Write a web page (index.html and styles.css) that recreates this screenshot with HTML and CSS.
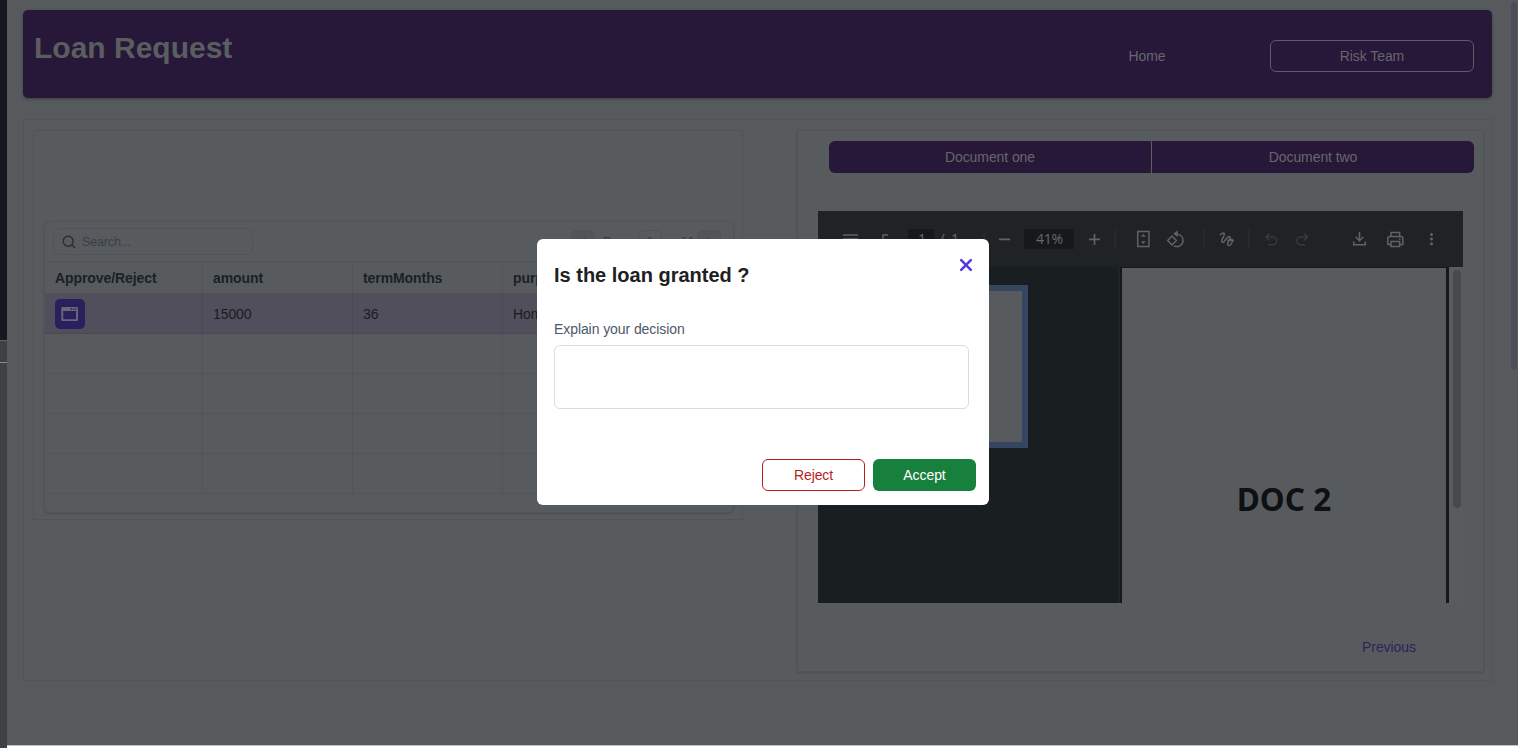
FILE: index.html
```html
<!DOCTYPE html>
<html lang="en">
<head>
<meta charset="utf-8">
<title>Loan Request</title>
<link rel="stylesheet" href="styles.css">
</head>
<body>
<div class="app">
  <div class="rail"><div class="rail-top"></div><div class="rail-mark"></div></div>
  <main class="main">
    <header class="banner">
      <h1>Loan Request</h1>
      <nav class="nav">
        <a class="nav-item">Home</a>
        <a class="nav-item outlined">Risk Team</a>
      </nav>
    </header>
    <section class="content">
      <div class="panel requests">
        <div class="card">
          <div class="toolbar">
            <div class="search">
              <svg width="14" height="14" viewBox="0 0 14 14" fill="none" stroke="#292e34" stroke-width="1.4"><circle cx="6.2" cy="6.2" r="5"/><path d="M9.8 9.8l3.2 3.2"/></svg>
              <span>Search...</span>
            </div>
            <div class="pager">
              <span class="page-btn"><svg width="8" height="10" viewBox="0 0 8 10" fill="none" stroke="#3c4146" stroke-width="1.3"><path d="M6 1L2 5l4 4"/></svg></span>
              <span class="page-label">Page</span>
              <span class="page-no">1</span>
              <span class="page-of">of 1</span>
              <span class="page-btn"><svg width="8" height="10" viewBox="0 0 8 10" fill="none" stroke="#3c4146" stroke-width="1.3"><path d="M2 1l4 4-4 4"/></svg></span>
            </div>
          </div>
          <div class="grid head"><div>Approve/Reject</div><div>amount</div><div>termMonths</div><div>purpose</div><div></div></div>
          <div class="grid row selected">
            <div><span class="open-btn"><svg width="18" height="16" viewBox="0 0 18 16"><path fill="#686a72" fill-rule="evenodd" d="M1.500 1h14A1.300 1.300 0 0 1 17 2.300V13.700A1.300 1.300 0 0 1 15.500 15H1.500A1.300 1.300 0 0 1 .3 13.700V2.300A1.300 1.300 0 0 1 1.500 1zM2.200 5v8.200h12.900V5zM9.500 2.200v1.600H11V2.200zM12 2.200v1.600h1.200V2.200zM14.200 2.200v1.600h1.200V2.200z"/></svg></span></div>
            <div>15000</div><div>36</div><div>Home</div><div></div>
          </div>
          <div class="grid row"><div></div><div></div><div></div><div></div><div></div></div>
          <div class="grid row"><div></div><div></div><div></div><div></div><div></div></div>
          <div class="grid row"><div></div><div></div><div></div><div></div><div></div></div>
          <div class="grid row"><div></div><div></div><div></div><div></div><div></div></div>
        </div>
      </div>
      <div class="panel documents">
        <div class="tabs"><div class="tab">Document one</div><div class="tab">Document two</div></div>
        <div class="viewer">
          <div class="viewer-bar">
            <svg width="645" height="56" viewBox="0 0 645 56" fill="none" stroke="#606366" stroke-width="1.5">
              <path d="M25 24h15M25 28h15M25 32h15"/>
              <path d="M70 24h-5v10M65 34h4"/>
              <rect x="90" y="18" width="26" height="20" fill="#16191b" stroke="none"/>
              <rect x="206" y="18" width="50" height="20" fill="#16191b" stroke="none"/>
              <path stroke="#292d30" d="M166 18v20M297 18v20M386 18v20M431 18v20"/>
              <path stroke-width="1.700" d="M181 28.300h11M271 28.300h11M276.500 23v11"/>
              <rect x="319.700" y="20.500" width="11.300" height="15"/>
              <path fill="#606366" stroke="none" d="M322.800 25.800l2.500-2.800 2.500 2.800zM322.800 30.200l2.500 2.800 2.500-2.800z"/>
              <path d="M349.700 29.500l4.300-4.500 4.300 4.500-4.300 4.500zM356.800 23c4.600-.5 8.300 2.400 8.300 6.300 0 4.400-4.600 7.600-9.300 5.700"/>
              <path fill="#606366" stroke="none" d="M355.300 22.800l4.400-3.600v6.800z"/>
              <path d="M402 24.200c1.400-2.200 4.200-2.900 4.400-1 .2 2.300-4.200 6.300-2.300 8 2.500 1.800 4.300-6.500 7.400-5.700 2.800 1-2.900 5.900-1.700 8.400 1.300 1.900 4.400-.8 4.600-4.300-.1-2.400-4.300-.4-4.600 1.900M409.500 29.200h6.500"/>
              <g stroke="#363a3d"><path d="M451.500 22.500l-3.500 3.500 3.500 3.500M448.500 26h6.500c2.500 0 3.700 2 3.700 3.700s-1.200 4-3.700 4h-5M486 22.500l3.500 3.500-3.500 3.500M489 26h-6.500c-2.500 0-3.700 2-3.700 3.700s1.200 4 3.700 4h5"/></g>
              <path d="M541.500 21v8.500M537.700 26l3.800 3.800 3.800-3.800M535.700 30.500v3.300h11.600v-3.300"/>
              <path d="M573 25.500v-4h8.600v4M573 33.500h-3.200v-6.200c0-1 .8-1.800 1.800-1.800H583c1 0 1.800.8 1.800 1.800v6.200h-3.200M573 30.500h8.600v5H573zM581 28h1.500"/>
              <g fill="#606366" stroke="none"><circle cx="613.500" cy="23.500" r="1.500"/><circle cx="613.500" cy="28" r="1.500"/><circle cx="613.500" cy="32.700" r="1.500"/></g>
              <g class="bar-text"><text x="100" y="33">1</text><text x="121.500" y="33">/</text><text x="133" y="33">1</text><text x="218" y="33">41%</text></g>
            </svg>
          </div>
          <div class="viewer-body">
            <div class="thumbs"><div class="thumb"></div></div>
            <div class="sheet">DOC 2</div>
            <div class="track"><div class="grip"></div></div>
          </div>
        </div>
        <a class="previous">Previous</a>
      </div>
    </section>
    <div class="scrollbar"></div>
  </main>
</div>
<div class="modal">
  <div class="modal-head">
    <h2>Is the loan granted ?</h2>
    <svg class="close" width="14" height="14" viewBox="0 0 14 14" fill="none" stroke="#553adf" stroke-width="2.600" stroke-linecap="round"><path d="M2.200 2.200l9.600 9.600M11.800 2.200l-9.600 9.600"/></svg>
  </div>
  <div class="label">Explain your decision</div>
  <div class="textarea"></div>
  <div class="actions"><button class="btn reject">Reject</button><button class="btn accept">Accept</button></div>
</div>
</body>
</html>
```
FILE: styles.css
```css
* { box-sizing: border-box; }
body { margin: 0; width: 1518px; height: 748px; overflow: hidden; background: #fff; font: 14px/16px "Liberation Sans", Arial, sans-serif; letter-spacing: -0.08px; position: relative; }
.app { display: flex; height: 748px; }
.rail { width: 7px; background: #3f4145; }
.rail-top { height: 340px; background: #151820; }
.rail-mark { height: 23px; background: #404040; border-top: 1px solid #606060; border-bottom: 1px solid #8d8d8d; }
.main { position: relative; flex: 1; height: 746px; padding: 10px 26px 0 16px; background: #565a5d; border-bottom: 1px solid #bcc5cd; }
.scrollbar { position: absolute; right: 1px; top: 2px; width: 6px; height: 368px; border-radius: 3px; background: #4a4e56; }
.banner { display: flex; justify-content: space-between; height: 88px; padding: 0 18px 0 11px; border-radius: 5px; background: #271739; box-shadow: 0 1px 3px rgba(0,0,0,.3); color: #66676a; }
h1 { margin: 20px 0 0; font-size: 30px; line-height: 36px; letter-spacing: 0; color: #5b5e60; }
.nav { display: flex; gap: 21px; padding-top: 30px; }
.nav-item { width: 204px; height: 32px; line-height: 32px; text-align: center; border-radius: 6px; }
.outlined { border: 1px solid #5c5e61; line-height: 31px; }
.content { display: flex; justify-content: space-between; align-items: flex-start; height: 562px; margin-top: 21px; padding: 10px 7px 0 9px; border: 1px solid #505357; background: #585b5e; }
.panel { border: 1px solid #505357; }
.requests { width: 710px; height: 390px; padding: 90px 8px 0 10px; }
.card { height: 292px; border: 1px solid #505357; border-radius: 6px; box-shadow: 0 1px 2px rgba(0,0,0,.15); overflow: hidden; }
.toolbar { display: flex; justify-content: space-between; height: 40px; padding: 6px 12px 0 8px; border-bottom: 1px solid #505357; }
.search { display: flex; align-items: center; gap: 6px; width: 200px; height: 27px; padding-left: 8px; border: 1px solid #505458; border-radius: 6px; font-size: 12.5px; color: #373e48; letter-spacing: -0.15px; }
.pager { display: flex; align-items: center; height: 27px; font-size: 12.5px; color: #34393d; }
.page-btn, .page-no { display: flex; flex: none; align-items: center; justify-content: center; width: 24px; height: 24px; border: 1px solid #505357; border-radius: 5px; }
.page-btn { background: #515558; }
.page-label { width: 43px; padding-left: 8px; }
.page-of { width: 35px; padding-left: 13px; letter-spacing: -0.4px; white-space: nowrap; }
.grid { display: grid; grid-template-columns: 158px 150px 150px 150px 1fr; }
.grid > div { display: flex; align-items: center; padding-left: 10px; border-right: 1px solid #515458; border-bottom: 1px solid #515458; }
.head { height: 31px; font-weight: bold; color: #192128; }
.head > div { border-bottom: 0; padding-top: 1px; }
.row { height: 40px; color: #1b1c20; }
.selected { height: 41px; background: #514f5b; }
.selected > div { border-color: #4a4a53; padding-top: 2px; }
.open-btn { display: flex; align-items: center; justify-content: center; width: 30px; height: 30px; border-radius: 5px; background: #2a205f; }
.documents { width: 687px; height: 542px; padding: 10px 9px 0 20px; box-shadow: 0 1px 2px rgba(0,0,0,.15); }
.tabs { display: flex; gap: 1px; height: 32px; margin-left: 11px; background: #5c5e60; border-radius: 6px; overflow: hidden; }
.tab { flex: 1; line-height: 32px; text-align: center; background: #271739; color: #66676a; }
.viewer { width: 645px; height: 392px; margin-top: 38px; overflow: hidden; }
.viewer-bar { height: 56px; background: #1f2326; }
.viewer-bar svg { display: block; }
.bar-text { font: 14px "Open Sans", sans-serif; letter-spacing: -0.2px; fill: #66696b; stroke: none; }
.viewer-body { display: flex; height: 336px; background: #16191b; }
.thumbs { width: 302px; padding: 18px 0 0 93px; background: #191e20; border-right: 2px solid #1f2426; }
.thumb { width: 117px; height: 163px; border: 6px solid #364560; background: #585b5e; }
.sheet { width: 324px; margin: 1px 3px 0 2px; padding-top: 207px; background: #585b5e; color: #0d1113; text-align: center; font: bold 31.5px/48px "Noto Sans", sans-serif; letter-spacing: 0; }
.track { flex: 1; padding: 3px 0 0 4px; background: #595c5e; }
.grip { width: 8px; height: 238px; border-radius: 4px; background: #464a4c; }
.previous { display: block; width: 108px; margin: 36px 31px 0 auto; text-align: center; color: #2b235f; }
.modal { position: absolute; left: 537px; top: 239px; width: 452px; height: 266px; padding: 20px 13px 0 17px; border-radius: 6px; background: #fff; }
.modal-head { display: flex; justify-content: space-between; align-items: flex-start; height: 62px; padding-right: 3px; }
h2 { margin: 4px 0 0; font-size: 20px; line-height: 24px; letter-spacing: 0; color: #202022; }
.close { margin-top: -1px; }
.label { color: #4c586b; }
.textarea { width: 415px; height: 64px; margin-top: 8px; border: 1px solid #dcdcdf; border-radius: 6px; }
.actions { display: flex; justify-content: flex-end; gap: 8px; margin-top: 50px; }
.btn { width: 103px; height: 32px; padding: 0; border-radius: 6px; font: inherit; letter-spacing: inherit; }
.reject { border: 1px solid #b91c1c; background: #fff; color: #b91c1c; }
.accept { border: 0; background: #18803d; color: #fff; }
```
